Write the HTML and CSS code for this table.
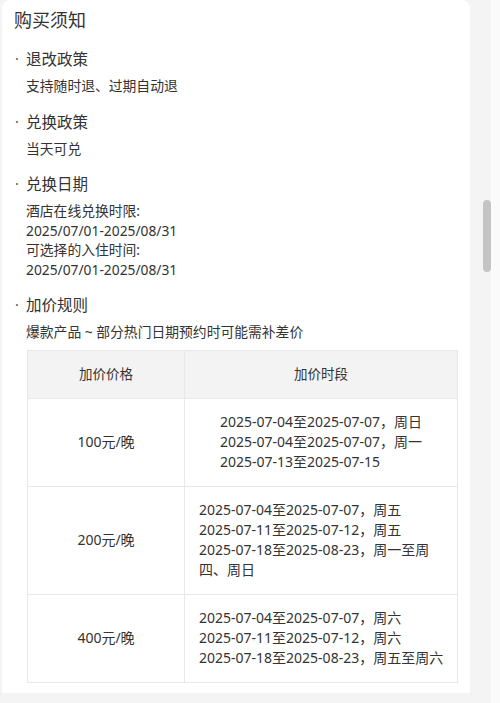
FILE: index.html
```html
<!DOCTYPE html>
<html lang="zh-CN">
<head>
<meta charset="utf-8">
<title>购买须知</title>
<link rel="stylesheet" href="styles.css">
</head>
<body>
<div class="viewport">
  <div class="card">
    <h2 class="title">购买须知</h2>

    <section class="sec">
      <span class="dot">·</span>
      <h3 class="sec-title">退改政策</h3>
      <div class="sec-body">支持随时退、过期自动退</div>
    </section>

    <section class="sec">
      <span class="dot">·</span>
      <h3 class="sec-title">兑换政策</h3>
      <div class="sec-body">当天可兑</div>
    </section>

    <section class="sec">
      <span class="dot">·</span>
      <h3 class="sec-title">兑换日期</h3>
      <div class="sec-body">
        <div>酒店在线兑换时限:</div>
        <div>2025/07/01-2025/08/31</div>
        <div>可选择的入住时间:</div>
        <div>2025/07/01-2025/08/31</div>
      </div>
    </section>

    <section class="sec">
      <span class="dot">·</span>
      <h3 class="sec-title">加价规则</h3>
      <div class="sec-body">爆款产品 ~ 部分热门日期预约时可能需补差价</div>
    </section>

    <table class="price">
      <colgroup><col class="col1"><col class="col2"></colgroup>
      <thead>
        <tr><th>加价价格</th><th>加价时段</th></tr>
      </thead>
      <tbody>
        <tr>
          <td>100元/晚</td>
          <td><div class="periods">2025-07-04至2025-07-07，周日<br>2025-07-04至2025-07-07，周一<br>2025-07-13至2025-07-15</div></td>
        </tr>
        <tr>
          <td>200元/晚</td>
          <td><div class="periods periods-full">2025-07-04至2025-07-07，周五<br>2025-07-11至2025-07-12，周五<br>2025-07-18至2025-08-23，周一至周<br>四、周日</div></td>
        </tr>
        <tr>
          <td>400元/晚</td>
          <td><div class="periods">2025-07-04至2025-07-07，周六<br>2025-07-11至2025-07-12，周六<br>2025-07-18至2025-08-23，周五至周六</div></td>
        </tr>
      </tbody>
    </table>
  </div>
  <div class="thumb"></div>
</div>
</body>
</html>
```

FILE: styles.css
```css
html, body {
  margin: 0;
  padding: 0;
}
body {
  background: #fafafa;
  font-family: "Noto Sans", "Noto Sans CJK SC", sans-serif;
  color: #333;
}
.viewport {
  position: relative;
  width: 491px;
  height: 703px;
  background: #f4f4f4;
  overflow: hidden;
}
.card {
  margin-left: 2px;
  width: 468px;
  box-sizing: border-box;
  background: #fff;
  border-radius: 8px 8px 0 0;
  padding: 7px 12px 10px 12px;
}
.title {
  margin: 0;
  font-size: 18px;
  line-height: 26px;
  font-weight: 400;
  color: #333;
}
.sec {
  display: grid;
  grid-template-columns: 12px 1fr;
  margin-top: 15px;
}
.dot {
  grid-column: 1;
  grid-row: 1;
  font-size: 14px;
  line-height: 22px;
  color: #555;
  padding-left: 1px;
}
.sec-title {
  grid-column: 2;
  grid-row: 1;
  margin: 0;
  font-size: 15.5px;
  line-height: 22px;
  font-weight: 400;
  color: #333;
}
.sec-body {
  grid-column: 2;
  grid-row: 2;
  margin-top: 6px;
  font-size: 13.8px;
  line-height: 19.5px;
  color: #333;
}
.price {
  margin: 8px 0 0 13px;
  width: 431px;
  border-collapse: collapse;
  table-layout: fixed;
  font-size: 14px;
  line-height: 20px;
  color: #333;
}
.col1 {
  width: 157px;
}
.price th, .price td {
  border: 1px solid #e8e8e8;
  padding: 13.5px 14px;
  text-align: center;
  vertical-align: middle;
  font-weight: 400;
}
.price th {
  background: #f3f3f3;
  font-size: 13.5px;
}
.periods {
  display: inline-block;
  text-align: left;
  white-space: nowrap;
}
.periods-full {
  display: block;
}
.thumb {
  position: absolute;
  left: 483px;
  top: 200px;
  width: 8px;
  height: 72px;
  border-radius: 4px;
  background: #c4c4c4;
}
```
